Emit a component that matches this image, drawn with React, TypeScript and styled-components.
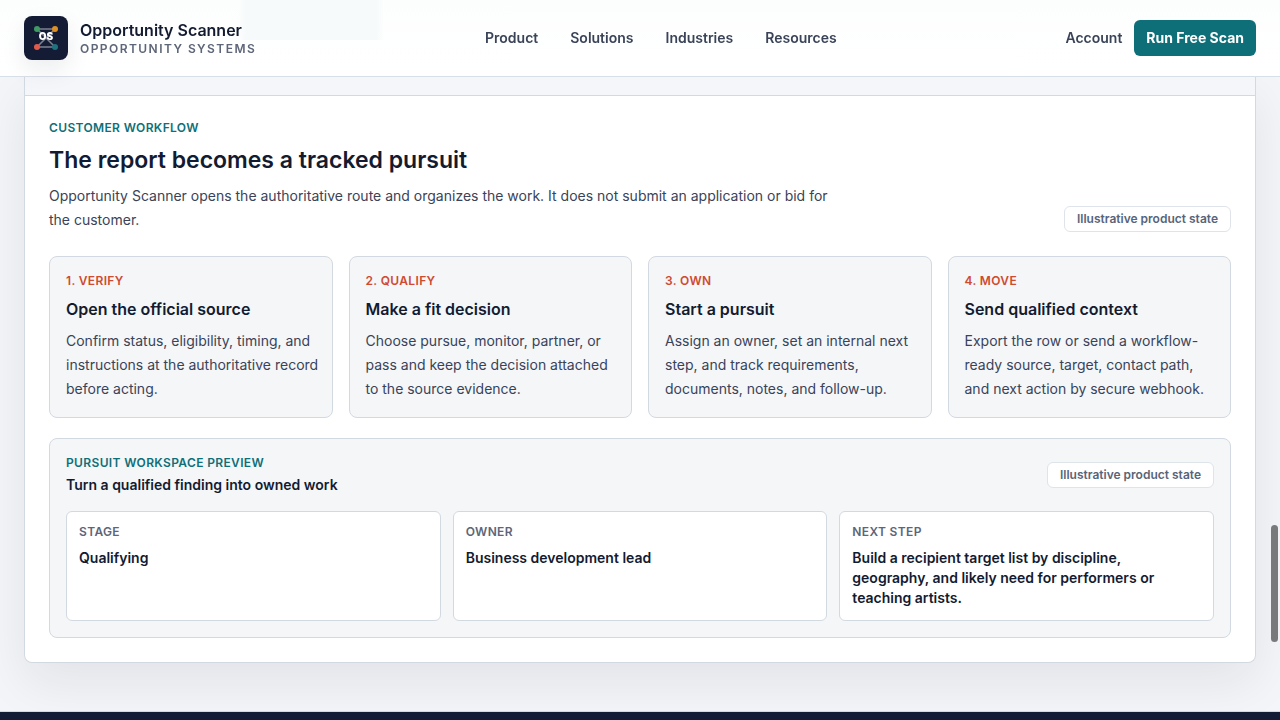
import React from "react";
import styled, { createGlobalStyle } from "styled-components";

const GlobalStyle = createGlobalStyle`
  *, *::before, *::after { box-sizing: border-box; }
  html { scrollbar-width: none; }
  body {
    margin: 0;
    background: #f4f5f8;
    color: #131b31;
    font-family: Inter, "Liberation Sans", sans-serif;
    font-size: 14px;
    line-height: 20px;
    -webkit-font-smoothing: antialiased;
  }
  h2, h3, h4, p, dl, dt, dd, ol { margin: 0; padding: 0; }
`;

const Header = styled.header`
  position: sticky;
  top: 0;
  z-index: 10;
  display: flex;
  align-items: center;
  justify-content: space-between;
  padding: 16px 24px;
  border-bottom: 1px solid #d8dfe6;
  background:
    linear-gradient(90deg, transparent, #f6fafb 8px, #f6fafb 138px, transparent) 238px 0 / 146px 40px no-repeat,
    linear-gradient(#fcfefd, #ffffff);
`;

const Brand = styled.a`
  display: flex;
  align-items: center;
  gap: 12px;
  color: inherit;
  text-decoration: none;
`;

const LogoMark = styled.svg`
  display: block;
  width: 44px;
  height: 44px;
  border-radius: 8px;
  background: #131b35;
  box-shadow: 0 10px 24px rgba(19, 27, 49, 0.08);
`;

const BrandText = styled.span`
  display: flex;
  flex-direction: column;
`;

const BrandName = styled.span`
  font-size: 16px;
  font-weight: 600;
  line-height: 22px;
`;

const BrandTag = styled.span`
  color: #5d6578;
  font-size: 12px;
  font-weight: 600;
  line-height: 16px;
  letter-spacing: 0.12em;
  text-transform: uppercase;
`;

const Nav = styled.nav`
  display: flex;
  gap: 32px;
`;

const NavLink = styled.a`
  color: #3a4358;
  font-weight: 600;
  text-decoration: none;
`;

const Actions = styled.div`
  display: flex;
  align-items: center;
  gap: 12px;
`;

const ScanButton = styled.button`
  padding: 8px 12px;
  border: 0;
  border-radius: 6px;
  background: #0f6f78;
  color: #ffffff;
  font: inherit;
  font-weight: 700;
`;

const Main = styled.main`
  padding: 0 24px 48px;
`;

const Panel = styled.section`
  border: 1px solid #d3d9e1;
  border-top: 0;
  border-radius: 0 0 8px 8px;
  background: #ffffff;
  box-shadow: 0 20px 50px rgba(19, 20, 49, 0.08);
`;

const PanelStrip = styled.div`
  height: 19px;
  border-bottom: 1px solid #d3d9e1;
  background: #f4f6f9;
`;

const PanelBody = styled.div`
  padding: 24px;
`;

const SplitRow = styled.div<{ $align: "center" | "flex-end" }>`
  display: flex;
  align-items: ${({ $align }) => $align};
  justify-content: space-between;
  gap: 16px;
`;

const Eyebrow = styled.p<{ $tone?: "teal" | "red" }>`
  color: ${({ $tone }) => ($tone === "red" ? "#cf4a2f" : "#0f6f78")};
  font-size: 12px;
  font-weight: 600;
  line-height: 16px;
  letter-spacing: 0.03em;
  text-transform: uppercase;
`;

const Title = styled.h2`
  margin-top: 8px;
  font-size: 23px;
  font-weight: 600;
  line-height: 32px;
`;

const Copy = styled.p`
  max-width: 792px;
  margin-top: 8px;
  color: #3a4358;
  line-height: 24px;
`;

const Pill = styled.span`
  flex: none;
  padding: 4px 12px;
  border: 1px solid #dfe4ea;
  border-radius: 6px;
  background: #ffffff;
  color: #586479;
  font-size: 12px;
  font-weight: 600;
  line-height: 16px;
`;

const StepGrid = styled.ol`
  display: grid;
  grid-template-columns: repeat(4, 1fr);
  gap: 16px;
  margin-top: 24px;
  list-style: none;
`;

const StepCard = styled.li`
  padding: 16px 12px 16px 16px;
  border: 1px solid #d3d9e1;
  border-radius: 8px;
  background: #f4f6f8;
`;

const StepTitle = styled.h3`
  margin-top: 8px;
  font-size: 16px;
  font-weight: 600;
  line-height: 24px;
`;

const Preview = styled.section`
  margin-top: 20px;
  padding: 16px;
  border: 1px solid #d3d9e1;
  border-radius: 8px;
  background: #f4f6f8;
`;

const PreviewTitle = styled.h3`
  margin-top: 4px;
  font-size: 14px;
  font-weight: 600;
  line-height: 20px;
`;

const FactGrid = styled.dl`
  display: grid;
  grid-template-columns: repeat(3, 1fr);
  gap: 12px;
  margin-top: 16px;
`;

const Fact = styled.div`
  padding: 12px;
  border: 1px solid #d3d9e1;
  border-radius: 6px;
  background: #ffffff;
`;

const FactLabel = styled.dt`
  color: #5d6578;
  font-size: 12px;
  font-weight: 600;
  line-height: 16px;
  letter-spacing: 0.03em;
  text-transform: uppercase;
`;

const FactValue = styled.dd`
  margin-top: 8px;
  font-weight: 600;
`;

const Footer = styled.footer`
  height: 48px;
  border-top: 1px solid #d3d9e1;
  background: #131b35;
`;

const Page = styled.div`
  height: 100vh;
  overflow: hidden;
`;

const ScrollThumb = styled.div`
  position: fixed;
  top: 525px;
  right: 2px;
  z-index: 20;
  width: 7px;
  height: 117px;
  border-radius: 4px;
  background: #78797b;
`;

const navItems = ["Product", "Solutions", "Industries", "Resources"];

const steps = [
  {
    label: "1. Verify",
    title: "Open the official source",
    text: "Confirm status, eligibility, timing, and instructions at the authoritative record before acting.",
  },
  {
    label: "2. Qualify",
    title: "Make a fit decision",
    text: "Choose pursue, monitor, partner, or pass and keep the decision attached to the source evidence.",
  },
  {
    label: "3. Own",
    title: "Start a pursuit",
    text: "Assign an owner, set an internal next step, and track requirements, documents, notes, and follow-up.",
  },
  {
    label: "4. Move",
    title: "Send qualified context",
    text: "Export the row or send a workflow-ready source, target, contact path, and next action by secure webhook.",
  },
];

const facts = [
  { label: "Stage", value: "Qualifying" },
  { label: "Owner", value: "Business development lead" },
  {
    label: "Next step",
    value:
      "Build a recipient target list by discipline, geography, and likely need for performers or teaching artists.",
  },
];

function Logo() {
  return (
    <LogoMark viewBox="0 0 44 44" aria-hidden="true">
      <path
        d="M13 13H31L13 31H31L13 13"
        fill="none"
        stroke="#ffffff"
        strokeOpacity="0.45"
        strokeWidth="1.5"
      />
      <circle cx="13" cy="13" r="3" fill="#3f9b63" />
      <circle cx="31" cy="13" r="3" fill="#dc8f22" />
      <circle cx="13" cy="31" r="3" fill="#e0594b" />
      <circle cx="31" cy="31" r="3" fill="#1f7180" />
      <text
        x="22"
        y="24"
        textAnchor="middle"
        fill="#ffffff"
        fontFamily="Inter, sans-serif"
        fontSize="10"
        fontWeight="900"
      >
        OS
      </text>
    </LogoMark>
  );
}

export default function App() {
  return (
    <Page>
      <GlobalStyle />
      <Header>
        <Brand href="#">
          <Logo />
          <BrandText>
            <BrandName>Opportunity Scanner</BrandName>
            <BrandTag>Opportunity Systems</BrandTag>
          </BrandText>
        </Brand>
        <Nav aria-label="Primary">
          {navItems.map((item) => (
            <NavLink href="#" key={item}>
              {item}
            </NavLink>
          ))}
        </Nav>
        <Actions>
          <NavLink href="#">Account</NavLink>
          <ScanButton type="button">Run Free Scan</ScanButton>
        </Actions>
      </Header>
      <Main>
        <Panel>
          <PanelStrip />
          <PanelBody>
            <SplitRow $align="flex-end">
              <div>
                <Eyebrow>Customer workflow</Eyebrow>
                <Title>The report becomes a tracked pursuit</Title>
                <Copy>
                  Opportunity Scanner opens the authoritative route and organizes the work. It does
                  not submit an application or bid for the customer.
                </Copy>
              </div>
              <Pill>Illustrative product state</Pill>
            </SplitRow>
            <StepGrid>
              {steps.map((step) => (
                <StepCard key={step.label}>
                  <Eyebrow $tone="red">{step.label}</Eyebrow>
                  <StepTitle>{step.title}</StepTitle>
                  <Copy>{step.text}</Copy>
                </StepCard>
              ))}
            </StepGrid>
            <Preview>
              <SplitRow $align="center">
                <div>
                  <Eyebrow>Pursuit workspace preview</Eyebrow>
                  <PreviewTitle>Turn a qualified finding into owned work</PreviewTitle>
                </div>
                <Pill>Illustrative product state</Pill>
              </SplitRow>
              <FactGrid>
                {facts.map((fact) => (
                  <Fact key={fact.label}>
                    <FactLabel>{fact.label}</FactLabel>
                    <FactValue>{fact.value}</FactValue>
                  </Fact>
                ))}
              </FactGrid>
            </Preview>
          </PanelBody>
        </Panel>
      </Main>
      <Footer />
      <ScrollThumb aria-hidden="true" />
    </Page>
  );
}
